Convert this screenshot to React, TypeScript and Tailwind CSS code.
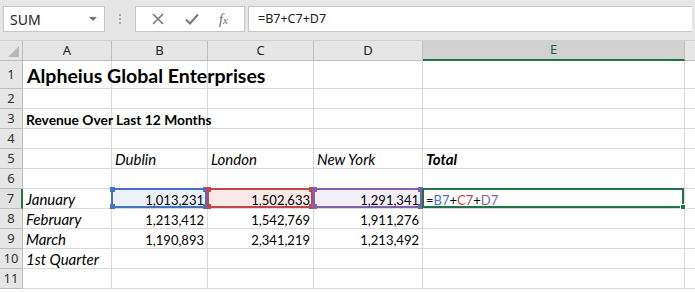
import React from 'react';

const cellFont = { fontFamily: 'Lato, "Noto Sans", sans-serif' };
const uiFont = { fontFamily: '"Noto Sans", "Open Sans", sans-serif' };

const cols = ['A', 'B', 'C', 'D', 'E'];
const colWidths = '23px 89px 96px 106px 109px 262px 10px';

type Cell = { text?: string; cls?: string };

const num = 'text-right pr-[3px] text-[13px]';

const rows: { h: number; cells: Cell[] }[] = [
  { h: 28, cells: [{ text: 'Alpheius Global Enterprises', cls: 'font-bold text-[19.5px] pl-[4px] pb-[3px]' }] },
  { h: 20, cells: [] },
  { h: 20, cells: [{ text: 'Revenue Over Last 12 Months', cls: 'font-bold text-[13.8px] pl-[3px]' }] },
  { h: 20, cells: [] },
  {
    h: 20,
    cells: [
      {},
      { text: 'Dublin', cls: 'italic pl-[3px]' },
      { text: 'London', cls: 'italic pl-[3px]' },
      { text: 'New York', cls: 'italic pl-[3px]' },
      { text: 'Total', cls: 'italic font-bold pl-[3px]' },
    ],
  },
  { h: 20, cells: [] },
  {
    h: 20,
    cells: [
      { text: 'January', cls: 'italic pl-[3px]' },
      { text: '1,013,231', cls: num },
      { text: '1,502,633', cls: num },
      { text: '1,291,341', cls: num },
    ],
  },
  {
    h: 20,
    cells: [
      { text: 'February', cls: 'italic pl-[3px]' },
      { text: '1,213,412', cls: num },
      { text: '1,542,769', cls: num },
      { text: '1,911,276', cls: num },
    ],
  },
  {
    h: 20,
    cells: [
      { text: 'March', cls: 'italic pl-[3px]' },
      { text: '1,190,893', cls: num },
      { text: '2,341,219', cls: num },
      { text: '1,213,492', cls: num },
    ],
  },
  { h: 20, cells: [{ text: '1st Quarter', cls: 'italic pl-[3px]' }] },
  { h: 20, cells: [] },
];

function Handles({ color }: { color: string }) {
  const base = 'absolute w-[5px] h-[5px]';
  return (
    <>
      <span className={`${base} -left-[3px] -top-[3px]`} style={{ background: color }} />
      <span className={`${base} -right-[3px] -top-[3px]`} style={{ background: color }} />
      <span className={`${base} -left-[3px] -bottom-[3px]`} style={{ background: color }} />
      <span className={`${base} -right-[3px] -bottom-[3px]`} style={{ background: color }} />
    </>
  );
}

function RefBox({ border, fill }: { border: string; fill: string }) {
  return (
    <div className="absolute -left-px -top-px right-0 bottom-0 border-2" style={{ borderColor: border, background: fill }}>
      <Handles color={border} />
    </div>
  );
}

const refs: Record<number, { border: string; fill: string }> = {
  1: { border: '#4472c4', fill: '#ebf0fa' },
  2: { border: '#c0474a', fill: '#fbe8e8' },
  3: { border: '#8062b3', fill: '#f2eef8' },
};

export default function App() {
  return (
    <div className="w-[695px] h-[292px] overflow-hidden bg-white text-[#000]" style={cellFont}>
      {/* Formula bar */}
      <div className="h-[41px] bg-[#e6e6e6] flex items-start pt-[6px] px-[3px] border-b border-[#d0d0d0]" style={uiFont}>
        <div className="w-[102px] h-[26px] bg-white border border-[#c6c6c6] flex items-center justify-between pl-[6px] pr-[7px] text-[14px] text-[#222]">
          <span>SUM</span>
          <span className="w-0 h-0 border-l-[4px] border-r-[4px] border-t-[4px] border-l-transparent border-r-transparent border-t-[#777]" />
        </div>
        <div className="w-[30px] h-[26px] flex flex-col items-center justify-center gap-[2px]">
          <span className="w-[2px] h-[2px] bg-[#aaa]" />
          <span className="w-[2px] h-[2px] bg-[#aaa]" />
          <span className="w-[2px] h-[2px] bg-[#aaa]" />
        </div>
        <div className="w-[110px] h-[26px] bg-white border border-[#c6c6c6] flex items-center justify-around px-[6px]">
          <svg width="12" height="12" viewBox="0 0 12 12">
            <path d="M1 1 L11 11 M11 1 L1 11" stroke="#777" strokeWidth="1.6" />
          </svg>
          <svg width="14" height="12" viewBox="0 0 14 12">
            <path d="M1 6.5 L5 10.5 L13 1.5" stroke="#777" strokeWidth="2" fill="none" />
          </svg>
          <span className="italic text-[#666] text-[14px]" style={{ fontFamily: '"Liberation Serif", serif' }}>
            f<span className="text-[11px]">x</span>
          </span>
        </div>
        <div className="flex-1 ml-[3px] h-[26px] bg-white border border-[#c6c6c6] border-r-0 flex items-center pl-[9px] text-[12.5px] text-[#222]">
          =B7+C7+D7
        </div>
      </div>

      {/* Grid */}
      <div className="grid" style={{ gridTemplateColumns: colWidths }}>
        {/* Header row */}
        <div className="h-[20px] bg-[#e6e6e6] border-r border-b border-[#bdbdbd] relative">
          <svg className="absolute right-[3px] bottom-[3px]" width="11" height="11" viewBox="0 0 11 11">
            <path d="M11 0 L11 11 L0 11 Z" fill="#b8b8b8" />
          </svg>
        </div>
        {cols.map((c) => (
          <div
            key={c}
            className={
              c === 'E'
                ? 'h-[20px] bg-[#d2d2d2] border-r border-[#bdbdbd] border-b-2 border-b-[#217346] text-[#1f5c3a] flex items-center justify-center text-[13px]'
                : 'h-[20px] bg-[#e6e6e6] border-r border-b border-[#bdbdbd] text-[#222] flex items-center justify-center text-[13px]'
            }
            style={uiFont}
          >
            {c}
          </div>
        ))}
        <div className="h-[20px] bg-[#e6e6e6] border-b border-[#bdbdbd]" />

        {rows.map((r, ri) => {
          const rowNum = ri + 1;
          return (
            <React.Fragment key={rowNum}>
              <div
                className={
                  rowNum === 7
                    ? 'bg-[#e1e1e1] border-b border-[#bdbdbd] border-r-2 border-r-[#217346] flex items-center justify-center text-[13px] text-[#333]'
                    : 'bg-[#e6e6e6] border-b border-r border-[#bdbdbd] flex items-center justify-center text-[13px] text-[#333]'
                }
                style={{ ...uiFont, height: r.h }}
              >
                {rowNum}
              </div>
              {cols.map((c, ci) => {
                const cell = r.cells[ci];
                const isRef = rowNum === 7 && refs[ci];
                const isActive = rowNum === 7 && c === 'E';
                return (
                  <div key={c} className="relative border-r border-b border-[#d9d9d9] text-[15px] leading-none" style={{ height: r.h }}>
                    {isRef && <RefBox border={refs[ci].border} fill={refs[ci].fill} />}
                    {isActive && (
                      <div className="absolute -left-px -top-px right-0 bottom-0 border-2 border-[#217346]">
                        <span className="absolute -right-[4px] -bottom-[4px] w-[6px] h-[6px] bg-[#217346] border border-white" />
                      </div>
                    )}
                    {cell?.text && (
                      <div
                        className={`absolute inset-0 flex items-end pb-[1px] whitespace-nowrap z-10 ${cell.cls ?? ''} ${
                          cell.cls?.includes('text-right') ? 'justify-end' : 'justify-start'
                        }`}
                      >
                        {cell.text}
                      </div>
                    )}
                    {isActive && (
                      <div className="absolute inset-0 flex items-end pb-[1px] pl-[3px] z-10 whitespace-nowrap text-[13px]">
                        =<span className="text-[#4472c4]">B7</span>+<span className="text-[#c0474a]">C7</span>+
                        <span className="text-[#8062b3]">D7</span>
                      </div>
                    )}
                  </div>
                );
              })}
              <div className="border-b border-[#d9d9d9]" style={{ height: r.h }} />
            </React.Fragment>
          );
        })}
      </div>
    </div>
  );
}
